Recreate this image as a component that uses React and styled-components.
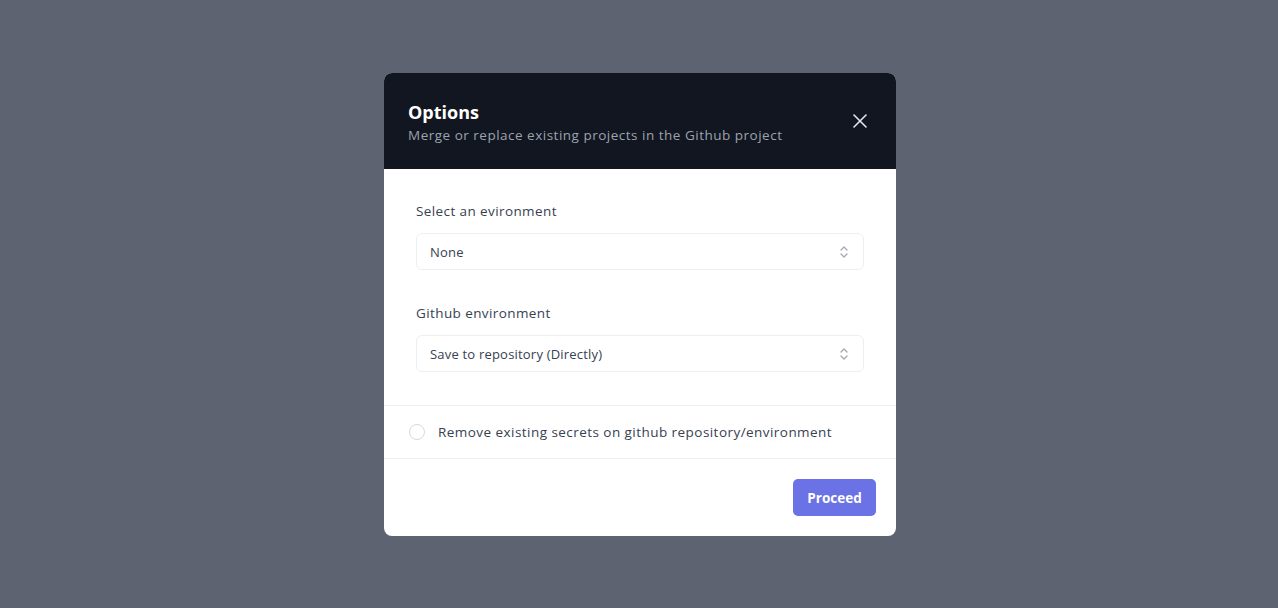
import React from "react";
import styled, { createGlobalStyle } from "styled-components";

const GlobalStyle = createGlobalStyle`
  html, body {
    margin: 0;
    padding: 0;
    background: #5d6370;
  }
  body {
    font-family: "Open Sans", "Noto Sans", sans-serif;
    -webkit-font-smoothing: antialiased;
  }
`;

const Backdrop = styled.div`
  width: 1278px;
  height: 608px;
  display: flex;
  justify-content: center;
  align-items: flex-start;
  padding: 73px 0 0 2px;
  box-sizing: border-box;
  background: #5d6370;
`;

const Modal = styled.div`
  width: 512px;
  background: #fff;
  border-radius: 8px;
  overflow: hidden;
`;

const Header = styled.div`
  background: #111620;
  height: 96px;
  box-sizing: border-box;
  padding: 26px 24px 0 24px;
  display: flex;
  justify-content: space-between;
  align-items: flex-start;
`;

const HeaderText = styled.div`
  display: flex;
  flex-direction: column;
`;

const Title = styled.h2`
  margin: 0;
  font-size: 18px;
  font-weight: 700;
  line-height: 26px;
  color: #fff;
`;

const Subtitle = styled.p`
  margin: 0;
  font-size: 13.5px;
  line-height: 20px;
  color: #9ca3af;
  letter-spacing: 0.5px;
`;

const CloseButton = styled.button`
  background: none;
  border: none;
  padding: 0;
  margin-top: 10px;
  width: 24px;
  height: 24px;
  display: flex;
  align-items: center;
  justify-content: center;
  color: #e5e7f0;
  cursor: pointer;
`;

const Body = styled.div`
  padding: 32px 32px 33px;
  display: flex;
  flex-direction: column;
  gap: 33px;
`;

const Field = styled.div`
  display: flex;
  flex-direction: column;
  gap: 12px;
`;

const Label = styled.label`
  font-size: 13.5px;
  line-height: 20px;
  color: #374151;
  letter-spacing: 0.4px;
`;

const Select = styled.div`
  height: 37px;
  box-sizing: border-box;
  border: 1px solid #eceef2;
  border-radius: 6px;
  padding: 0 14px 0 13px;
  display: flex;
  align-items: center;
  justify-content: space-between;
  font-size: 13px;
  color: #374151;
  letter-spacing: 0.2px;
`;

const CheckRow = styled.div`
  border-top: 1px solid #eceef2;
  border-bottom: 1px solid #eceef2;
  height: 54px;
  box-sizing: border-box;
  padding: 0 25px;
  display: flex;
  align-items: center;
  gap: 13px;
  font-size: 13.5px;
  color: #374151;
  letter-spacing: 0.45px;
`;

const Radio = styled.span`
  width: 16px;
  height: 16px;
  border-radius: 50%;
  border: 1px solid #d6d9de;
  box-sizing: border-box;
  flex-shrink: 0;
`;

const Footer = styled.div`
  padding: 20px;
  display: flex;
  justify-content: flex-end;
`;

const PrimaryButton = styled.button`
  height: 37px;
  width: 83px;
  border: none;
  border-radius: 5px;
  background: #6b72e6;
  color: #fff;
  font-family: inherit;
  font-size: 13.5px;
  font-weight: 700;
  cursor: pointer;
`;

const Chevrons = () => (
  <svg width="10" height="16" viewBox="0 0 10 16" fill="none" stroke="#a3a8b3" strokeWidth="1.3" strokeLinecap="round" strokeLinejoin="round">
    <path d="M2 6 L5 3 L8 6" />
    <path d="M2 10 L5 13 L8 10" />
  </svg>
);

const CloseIcon = () => (
  <svg width="16" height="16" viewBox="0 0 16 16" fill="none" stroke="currentColor" strokeWidth="1.6" strokeLinecap="round">
    <path d="M2 2 L14 14" />
    <path d="M14 2 L2 14" />
  </svg>
);

export default function App() {
  return (
    <>
      <GlobalStyle />
      <Backdrop>
        <Modal>
          <Header>
            <HeaderText>
              <Title>Options</Title>
              <Subtitle>Merge or replace existing projects in the Github project</Subtitle>
            </HeaderText>
            <CloseButton aria-label="Close">
              <CloseIcon />
            </CloseButton>
          </Header>
          <Body>
            <Field>
              <Label>Select an evironment</Label>
              <Select>
                <span>None</span>
                <Chevrons />
              </Select>
            </Field>
            <Field>
              <Label>Github environment</Label>
              <Select>
                <span>Save to repository (Directly)</span>
                <Chevrons />
              </Select>
            </Field>
          </Body>
          <CheckRow>
            <Radio />
            <span>Remove existing secrets on github repository/environment</span>
          </CheckRow>
          <Footer>
            <PrimaryButton>Proceed</PrimaryButton>
          </Footer>
        </Modal>
      </Backdrop>
    </>
  );
}
